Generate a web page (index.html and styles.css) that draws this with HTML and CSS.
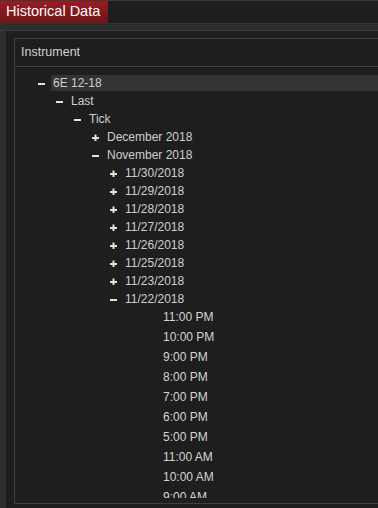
FILE: index.html
```html
<!DOCTYPE html>
<html lang="en">
  <head>
    <meta charset="UTF-8" />
    <meta name="viewport" content="width=device-width, initial-scale=1.0" />
    <title>Historical Data</title>
    <link rel="stylesheet" href="styles.css">
  </head>
  <body>
    <div class="tab-bar">
      <div class="tab">Historical Data</div>
    </div>
    <div class="tab-strip"></div>

    <div class="main">
      <div class="side"></div>
      <div class="content">
        <div class="panel">
          <div class="panel-header">Instrument</div>
          <div class="tree">
            <div class="row lvl-0 selected">
              <span class="toggle"><svg width="7" height="7" viewBox="0 0 7 7"><rect x="0" y="3" width="7" height="2" /></svg></span>
              <span class="label">6E 12-18</span>
            </div>
            <div class="row lvl-1">
              <span class="toggle"><svg width="7" height="7" viewBox="0 0 7 7"><rect x="0" y="3" width="7" height="2" /></svg></span>
              <span class="label">Last</span>
            </div>
            <div class="row lvl-2">
              <span class="toggle"><svg width="7" height="7" viewBox="0 0 7 7"><rect x="0" y="3" width="7" height="2" /></svg></span>
              <span class="label">Tick</span>
            </div>
            <div class="row lvl-3">
              <span class="toggle"><svg width="7" height="7" viewBox="0 0 7 7"><rect x="0" y="3" width="7" height="2" /><rect x="2.5" y="0.5" width="2" height="7" /></svg></span>
              <span class="label">December 2018</span>
            </div>
            <div class="row lvl-3">
              <span class="toggle"><svg width="7" height="7" viewBox="0 0 7 7"><rect x="0" y="3" width="7" height="2" /></svg></span>
              <span class="label">November 2018</span>
            </div>
            <div class="row lvl-4">
              <span class="toggle"><svg width="7" height="7" viewBox="0 0 7 7"><rect x="0" y="3" width="7" height="2" /><rect x="2.5" y="0.5" width="2" height="7" /></svg></span>
              <span class="label">11/30/2018</span>
            </div>
            <div class="row lvl-4">
              <span class="toggle"><svg width="7" height="7" viewBox="0 0 7 7"><rect x="0" y="3" width="7" height="2" /><rect x="2.5" y="0.5" width="2" height="7" /></svg></span>
              <span class="label">11/29/2018</span>
            </div>
            <div class="row lvl-4">
              <span class="toggle"><svg width="7" height="7" viewBox="0 0 7 7"><rect x="0" y="3" width="7" height="2" /><rect x="2.5" y="0.5" width="2" height="7" /></svg></span>
              <span class="label">11/28/2018</span>
            </div>
            <div class="row lvl-4">
              <span class="toggle"><svg width="7" height="7" viewBox="0 0 7 7"><rect x="0" y="3" width="7" height="2" /><rect x="2.5" y="0.5" width="2" height="7" /></svg></span>
              <span class="label">11/27/2018</span>
            </div>
            <div class="row lvl-4">
              <span class="toggle"><svg width="7" height="7" viewBox="0 0 7 7"><rect x="0" y="3" width="7" height="2" /><rect x="2.5" y="0.5" width="2" height="7" /></svg></span>
              <span class="label">11/26/2018</span>
            </div>
            <div class="row lvl-4">
              <span class="toggle"><svg width="7" height="7" viewBox="0 0 7 7"><rect x="0" y="3" width="7" height="2" /><rect x="2.5" y="0.5" width="2" height="7" /></svg></span>
              <span class="label">11/25/2018</span>
            </div>
            <div class="row lvl-4">
              <span class="toggle"><svg width="7" height="7" viewBox="0 0 7 7"><rect x="0" y="3" width="7" height="2" /><rect x="2.5" y="0.5" width="2" height="7" /></svg></span>
              <span class="label">11/23/2018</span>
            </div>
            <div class="row lvl-4">
              <span class="toggle"><svg width="7" height="7" viewBox="0 0 7 7"><rect x="0" y="3" width="7" height="2" /></svg></span>
              <span class="label">11/22/2018</span>
            </div>
            <div class="row leaf">11:00 PM</div>
            <div class="row leaf">10:00 PM</div>
            <div class="row leaf">9:00 PM</div>
            <div class="row leaf">8:00 PM</div>
            <div class="row leaf">7:00 PM</div>
            <div class="row leaf">6:00 PM</div>
            <div class="row leaf">5:00 PM</div>
            <div class="row leaf">11:00 AM</div>
            <div class="row leaf">10:00 AM</div>
            <div class="row leaf">9:00 AM</div>
          </div>
        </div>
      </div>
    </div>
  </body>
</html>
```

FILE: styles.css
```css
body {
  margin: 0;
  background-color: #1e1e1e;
  font-family: "Liberation Sans", Arial, sans-serif;
  color: #cfcfcf;
  overflow: hidden;
  height: 508px;
}

.tab-bar {
  height: 22px;
  border-top: 1px solid #3a3a3c;
  background-color: #1e1e1e;
  display: flex;
}

.tab {
  padding: 0 8px 0 6px;
  height: 22px;
  line-height: 21px;
  font-size: 14.5px;
  color: #ffffff;
  background: linear-gradient(#9a1b20, #6f1418);
}

.tab-strip {
  height: 6px;
  background-color: #2d2d30;
  border-top: 1px solid #343437;
  border-bottom: 1px solid #3e3e42;
}

.main {
  display: flex;
  height: 477px;
}

.side {
  width: 6px;
  background-color: #2d2d30;
  border-right: 1px solid #19191a;
}

.content {
  flex: 1;
  padding: 7px 0 0 7px;
  background-color: #1e1e1e;
}

.panel {
  height: 464px;
  margin-right: -20px;
  border: 1px solid #3f3f41;
  display: flex;
  flex-direction: column;
}

.panel-header {
  height: 27px;
  line-height: 26px;
  padding-left: 6px;
  font-size: 12.5px;
  color: #d2d2d2;
  border-bottom: 1px solid #3f3f41;
}

.tree {
  flex: 1;
  padding-top: 7px;
  margin-bottom: 5px;
  overflow: hidden;
  font-size: 12px;
}

.row {
  display: flex;
  align-items: center;
  height: 18px;
}

.toggle {
  width: 13px;
  display: flex;
  align-items: center;
}

.toggle svg {
  fill: #e2e2e2;
}

.label {
  flex: 1;
  padding-left: 2px;
  height: 16px;
  line-height: 16px;
}

.selected .label {
  background-color: #333335;
}

.lvl-0 { padding-left: 23px; }
.lvl-1 { padding-left: 41px; }
.lvl-2 { padding-left: 59px; }
.lvl-3 { padding-left: 77px; }
.lvl-4 { padding-left: 95px; }

.leaf {
  height: 18px;
  padding-bottom: 2px;
  padding-left: 148px;
  color: #d4d4d4;
}
```
